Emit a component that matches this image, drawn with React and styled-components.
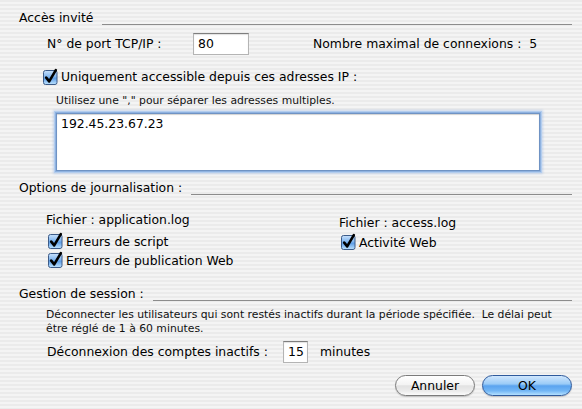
import React from 'react';
import styled, { createGlobalStyle } from 'styled-components';

const GlobalStyle = createGlobalStyle`
  html, body {
    margin: 0;
    padding: 0;
    background: repeating-linear-gradient(to bottom, #ebebeb 0, #ebebeb 2px, #f4f4f4 2px, #f4f4f4 4px);
  }
  body {
    font-family: "DejaVu Sans", "Liberation Sans", sans-serif;
    color: #000;
  }
`;

const Dialog = styled.div`
  width: 582px;
  height: 409px;
  box-sizing: border-box;
  padding: 10px 10px 0 19px;
  font-size: 12.4px;
  display: flex;
  flex-direction: column;
`;

const GroupHeader = styled.div`
  display: flex;
  align-items: flex-end;
  height: 16px;
  line-height: 16px;
  margin-top: ${p => p.$top || 0}px;
`;

const GroupTitle = styled.span`
  white-space: nowrap;
  margin-right: 9px;
`;

const Rule = styled.div`
  flex: 1;
  height: 1px;
  background: #8c8c8c;
  margin-bottom: 1px;
`;

const Row = styled.div`
  display: flex;
  align-items: center;
  height: ${p => p.$height || 22}px;
  margin-top: ${p => p.$top || 0}px;
  padding-left: ${p => p.$indent || 0}px;
`;

const FieldLabel = styled.span`
  width: ${p => p.$width}px;
  white-space: nowrap;
  line-height: 16px;
`;

const TextField = styled.div`
  box-sizing: border-box;
  width: ${p => p.$width}px;
  height: 22px;
  background: #fff;
  border: 1px solid #b4b4b4;
  border-top-color: #7e7e7e;
  box-shadow: inset 0 1px 1px rgba(0, 0, 0, 0.12);
  padding: 2px 0 0 4px;
  line-height: 16px;
`;

const Aside = styled.span`
  margin-left: 64px;
  white-space: nowrap;
  line-height: 16px;
`;

const CheckRow = styled.label`
  display: flex;
  align-items: center;
  height: ${p => p.$height || 19}px;
  margin-top: ${p => p.$top || 0}px;
  padding-left: ${p => p.$indent || 0}px;
  gap: 3px;
  line-height: 16px;
  white-space: nowrap;
`;

const Box = styled.svg`
  flex: none;
  overflow: visible;
`;

const Hint = styled.div`
  font-size: 10.8px;
  line-height: 14px;
  margin-top: ${p => p.$top || 0}px;
  padding-left: ${p => p.$indent || 0}px;
  color: #111;
`;

const AreaWrap = styled.div`
  margin: 5px 0 0 37px;
  width: 484px;
  height: 58px;
  box-sizing: border-box;
  background: #fff;
  border: 1px solid #6f93c4;
  box-shadow: 0 0 0 1px #8fb2e0, 0 0 0 2px #b3cdee, 0 0 2px 3px rgba(140, 176, 224, 0.4), inset 0 1px 1px rgba(0, 0, 0, 0.18);
  padding: 2px 0 0 4px;
  line-height: 16px;
`;

const Columns = styled.div`
  display: flex;
  margin-top: 16px;
  padding-left: 27px;
`;

const Column = styled.div`
  display: flex;
  flex-direction: column;
  width: ${p => p.$width}px;
  padding-top: ${p => p.$top || 0}px;
`;

const FileLabel = styled.div`
  line-height: 16px;
  height: 16px;
  margin-bottom: ${p => p.$gap || 4}px;
`;

const Unit = styled.span`
  margin-left: 12px;
  line-height: 16px;
`;

const Buttons = styled.div`
  display: flex;
  justify-content: flex-end;
  gap: 7px;
  margin-top: 12px;
`;

const PushButton = styled.button`
  box-sizing: border-box;
  width: ${p => p.$width}px;
  height: 21px;
  border-radius: 11px;
  font-family: inherit;
  font-size: 12.4px;
  color: #000;
  padding: 0;
  line-height: 19px;
  border: 1px solid ${p => (p.$primary ? '#2f5a9c' : '#7b7b7b')};
  background: ${p =>
    p.$primary
      ? 'linear-gradient(to bottom, #cfe6fd 0%, #9acbf7 42%, #5aa3ef 52%, #72b6f5 78%, #b3e0ff 100%)'
      : 'linear-gradient(to bottom, #ffffff 0%, #f4f4f4 45%, #e2e2e2 52%, #ececec 80%, #fbfbfb 100%)'};
  box-shadow: 0 1px 1px rgba(0, 0, 0, 0.18);
`;

function Check() {
  return (
    <Box width="15" height="15" viewBox="0 0 15 15">
      <defs>
        <linearGradient id="aquaBox" x1="0" y1="0" x2="0" y2="1">
          <stop offset="0" stopColor="#c9e1fb" />
          <stop offset="0.45" stopColor="#7fb5ef" />
          <stop offset="0.55" stopColor="#5d9de6" />
          <stop offset="1" stopColor="#bfe4ff" />
        </linearGradient>
      </defs>
      <rect x="0.5" y="0.5" width="13.5" height="14" rx="2" fill="url(#aquaBox)" stroke="#3c5b88" />
      <path d="M3.2 7.6 L6.2 11.4 L12.8 0.2" stroke="#000" strokeWidth="2.6" fill="none" strokeLinecap="round" strokeLinejoin="round" />
    </Box>
  );
}

export default function App() {
  return (
    <>
      <GlobalStyle />
      <Dialog>
        <GroupHeader>
          <GroupTitle>Accès invité</GroupTitle>
          <Rule />
        </GroupHeader>

        <Row $top={7} $indent={28}>
          <FieldLabel $width={146}>N° de port TCP/IP :</FieldLabel>
          <TextField $width={56}>80</TextField>
          <Aside>Nombre maximal de connexions :&nbsp; 5</Aside>
        </Row>

        <CheckRow $top={13} $height={18} $indent={24}>
          <Check />
          Uniquement accessible depuis ces adresses IP :
        </CheckRow>

        <Hint $top={8} $indent={37}>Utilisez une "," pour séparer les adresses multiples.</Hint>
        <AreaWrap>192.45.23.67.23</AreaWrap>

        <GroupHeader $top={9}>
          <GroupTitle>Options de journalisation :</GroupTitle>
          <Rule />
        </GroupHeader>

        <Columns>
          <Column $width={293}>
            <FileLabel>Fichier : application.log</FileLabel>
            <CheckRow $indent={2}>
              <Check />
              Erreurs de script
            </CheckRow>
            <CheckRow $indent={2}>
              <Check />
              Erreurs de publication Web
            </CheckRow>
          </Column>
          <Column $width={200} $top={3}>
            <FileLabel $gap={2}>Fichier : access.log</FileLabel>
            <CheckRow $indent={2}>
              <Check />
              Activité Web
            </CheckRow>
          </Column>
        </Columns>

        <GroupHeader $top={16}>
          <GroupTitle>Gestion de session :</GroupTitle>
          <Rule />
        </GroupHeader>

        <Hint $top={6} $indent={27}>
          Déconnecter les utilisateurs qui sont restés inactifs durant la période spécifiée.&nbsp; Le délai peut
          <br />
          être réglé de 1 à 60 minutes.
        </Hint>

        <Row $top={5} $indent={28}>
          <FieldLabel $width={236}>Déconnexion des comptes inactifs :</FieldLabel>
          <TextField $width={25}>15</TextField>
          <Unit>minutes</Unit>
        </Row>

        <Buttons>
          <PushButton $width={80}>Annuler</PushButton>
          <PushButton $width={90} $primary>OK</PushButton>
        </Buttons>
      </Dialog>
    </>
  );
}
